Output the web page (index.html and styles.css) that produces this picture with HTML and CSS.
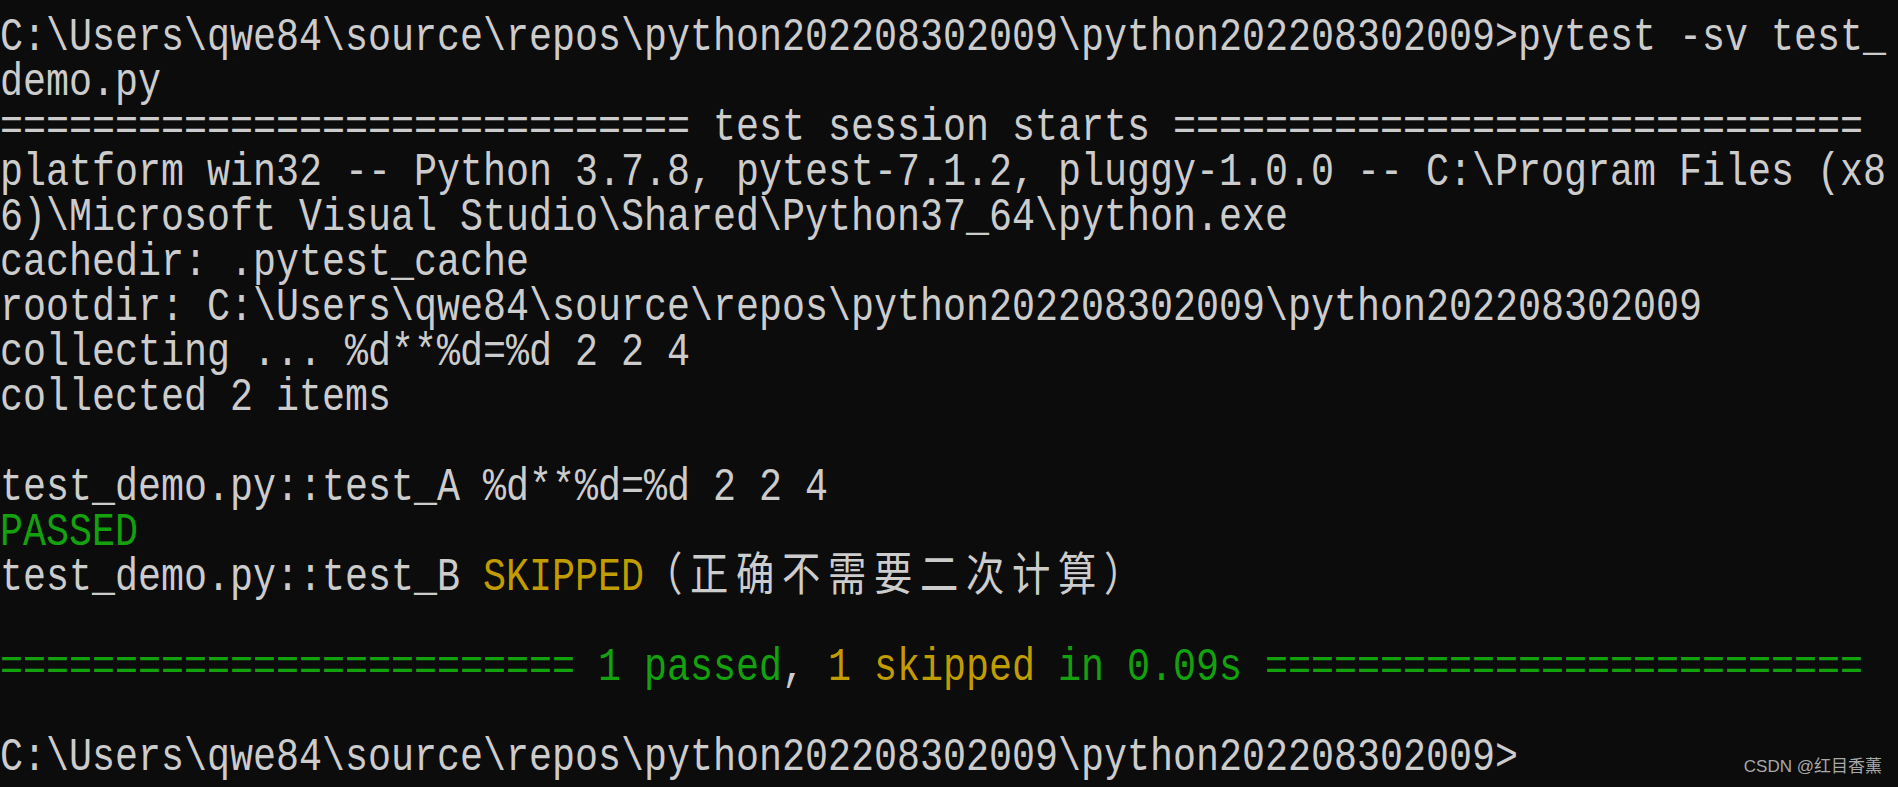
FILE: index.html
```html
<!DOCTYPE html>
<html lang="zh-CN">
<head>
<meta charset="utf-8">
<title>pytest</title>
<link rel="stylesheet" href="styles.css">
</head>
<body>
<main class="console">
<div class="screen">
<div class="out">
<div class="ln">C:\Users\qwe84\source\repos\python202208302009\python202208302009&gt;pytest -sv test_</div>
<div class="ln">demo.py</div>
<div class="ln">============================== test session starts ==============================</div>
<div class="ln">platform win32 -- Python 3.7.8, pytest-7.1.2, pluggy-1.0.0 -- C:\Program Files (x8</div>
<div class="ln">6)\Microsoft Visual Studio\Shared\Python37_64\python.exe</div>
<div class="ln">cachedir: .pytest_cache</div>
<div class="ln">rootdir: C:\Users\qwe84\source\repos\python202208302009\python202208302009</div>
<div class="ln">collecting ... %d**%d=%d 2 2 4</div>
<div class="ln">collected 2 items</div>
<div class="ln"></div>
<div class="ln">test_demo.py::test_A %d**%d=%d 2 2 4</div>
<div class="ln green">PASSED</div>
<div class="ln">test_demo.py::test_B <span class="yellow">SKIPPED</span><span class="cjk">（正确不需要二次计算）</span></div>
<div class="ln"></div>
<div class="ln"><span class="green">========================= 1 passed</span>, <span class="yellow">1 skipped</span><span class="green"> in 0.09s ==========================</span></div>
<div class="ln"></div>
<div class="ln">C:\Users\qwe84\source\repos\python202208302009\python202208302009&gt;</div>
</div>
</div>
<div class="mark">CSDN @红目香薰</div>
</main>
</body>
</html>
```

FILE: styles.css
```css
html, body {
  margin: 0;
  padding: 0;
  background: #0c0c0c;
}

.console {
  position: relative;
  width: 1898px;
  height: 787px;
  overflow: hidden;
  background: #0c0c0c;
}

.screen {
  padding-top: 16px;
}

.out {
  font-family: "Liberation Mono", monospace;
  font-size: 38.33px;
  line-height: 37.5px;
  color: #cccccc;
  transform: scaleY(1.2);
  transform-origin: 0 0;
}

.ln {
  height: 37.5px;
  white-space: pre;
}

.green {
  color: #13a10e;
}

.yellow {
  color: #c19c00;
}

.cjk {
  font-family: "Noto Sans CJK SC", sans-serif;
  letter-spacing: 7.67px;
  line-height: 20px;
}

.mark {
  position: absolute;
  right: 16px;
  bottom: 9px;
  font-family: "Liberation Sans", "Noto Sans CJK SC", sans-serif;
  font-size: 17px;
  line-height: 22px;
  color: #a8a8a8;
}
```
